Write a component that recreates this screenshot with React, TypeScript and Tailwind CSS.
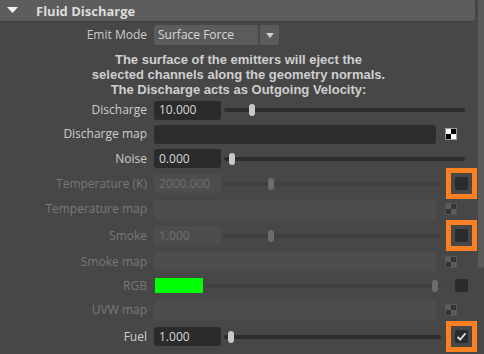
import React from 'react';

const enabledLabel = 'text-[#cdcdcd]';
const disabledLabel = 'text-[#787878]';

function Row({
  h,
  label,
  disabled,
  children,
}: {
  h: string;
  label: string;
  disabled?: boolean;
  children?: React.ReactNode;
}) {
  return (
    <div className={`flex shrink-0 items-center ${h}`}>
      <div className={`w-[147px] shrink-0 text-right whitespace-nowrap ${disabled ? disabledLabel : enabledLabel}`}>
        {label}
      </div>
      <div className="flex-1 flex items-center ml-[7px] min-w-0">{children}</div>
    </div>
  );
}

function NumBox({ value, disabled }: { value: string; disabled?: boolean }) {
  return (
    <div
      className={`w-[67px] h-[19px] shrink-0 rounded-[3px] pl-[5px] flex items-center ${
        disabled ? 'bg-[#4d4d4d] text-[#6f6f6f]' : 'bg-[#2b2b2b] text-[#d6dadd]'
      }`}
    >
      {value}
    </div>
  );
}

function Slider({ pos, disabled, end }: { pos: number; disabled?: boolean; end: string }) {
  return (
    <div className={`relative flex-1 h-[12px] flex items-center ml-[3px] ${end}`}>
      <div className={`w-full h-[4px] rounded-full ${disabled ? 'bg-[#3f3f3f]' : 'bg-[#2d2d2d]'}`} />
      <div
        className={`absolute top-0 w-[6px] h-[12px] rounded-[3px] ${disabled ? 'bg-[#6c6c6c]' : 'bg-[#c9c9c9]'}`}
        style={{ left: pos }}
      />
    </div>
  );
}

function Checker({ disabled }: { disabled?: boolean }) {
  const a = disabled ? 'bg-[#5c5c5c]' : 'bg-white';
  const b = disabled ? 'bg-[#343434]' : 'bg-black';
  return (
    <div className={`w-[12px] h-[12px] grid grid-cols-2 border ${disabled ? 'border-[#555]' : 'border-[#9a9a9a]'}`}>
      <div className={a} />
      <div className={b} />
      <div className={b} />
      <div className={a} />
    </div>
  );
}

function MapBox({ disabled }: { disabled?: boolean }) {
  return (
    <>
      <div className={`flex-1 h-[19px] rounded-[3px] ${disabled ? 'bg-[#4d4d4d]' : 'bg-[#2c2c2c]'}`} />
      <div className="w-[41px] shrink-0 pl-[9px] flex items-center">
        <Checker disabled={disabled} />
      </div>
    </>
  );
}

function Check({ highlight, checked }: { highlight?: boolean; checked?: boolean }) {
  return (
    <div
      className={`w-[31px] h-[31px] ml-[5px] shrink-0 flex items-center justify-center border-[5px] ${
        highlight ? 'border-[#fb8024]' : 'border-transparent'
      }`}
    >
      <div className="w-[13px] h-[13px] rounded-[2px] bg-[#2b2b2b] flex items-center justify-center">
        {checked && (
          <svg width="11" height="11" viewBox="0 0 11 11">
            <path d="M1.5 6 L4.2 8.6 L9.5 2.2" fill="none" stroke="#e0e0e0" strokeWidth="1.8" />
          </svg>
        )}
      </div>
    </div>
  );
}

export default function App() {
  return (
    <div className="w-[484px] h-[354px] overflow-hidden bg-[#474747] flex font-['Open_Sans',sans-serif] text-[12px] leading-[16px]">
      <div className="w-[477px] shrink-0 flex flex-col">
        <div className="h-[22px] mr-[2px] shrink-0 bg-[#5d5d5d] rounded-r-[3px] border-b border-[#3e3e3e] flex items-center">
          <svg width="12" height="7" viewBox="0 0 12 7" className="ml-[7px]">
            <path d="M0 0 L11 0 L5.5 6 Z" fill="#f2f2f2" />
          </svg>
          <span className="ml-[17px] font-bold text-[13px] text-[#dcdcdc]">Fluid Discharge</span>
        </div>

        <div className="mt-[2px] shrink-0">
          <Row h="h-[22px]" label="Emit Mode">
            <div className="w-[104px] h-[20px] bg-[#5b5b5b] rounded-[2px] pl-[4px] flex items-center text-[#d6dadd]">
              Surface Force
            </div>
            <div className="w-[19px] h-[20px] ml-[2px] bg-[#5b5b5b] rounded-[2px] flex items-center justify-center">
              <svg width="8" height="5" viewBox="0 0 8 5">
                <path d="M0 0 L8 0 L4 5 Z" fill="#cfcfcf" />
              </svg>
            </div>
          </Row>
        </div>

        <div className="pt-[6px] h-[52px] shrink-0 text-center font-bold font-['Liberation_Sans',sans-serif] text-[13px] text-[#cfcfcf] leading-[15px]">
          <div>The surface of the emitters will eject the</div>
          <div>selected channels along the geometry normals.</div>
          <div>The Discharge acts as Outgoing Velocity:</div>
        </div>

        <Row h="h-[24px]" label="Discharge">
          <NumBox value="10.000" />
          <Slider pos={25} end="mr-[12px]" />
        </Row>
        <Row h="h-[24px]" label="Discharge map">
          <MapBox />
        </Row>
        <Row h="h-[25px]" label="Noise">
          <NumBox value="0.000" />
          <Slider pos={5} end="mr-[12px]" />
        </Row>
        <Row h="h-[25px]" label="Temperature (K)" disabled>
          <NumBox value="2000.000" disabled />
          <Slider pos={44} disabled end="" />
          <Check highlight />
        </Row>
        <Row h="h-[26px]" label="Temperature map" disabled>
          <MapBox disabled />
        </Row>
        <Row h="h-[27px]" label="Smoke" disabled>
          <NumBox value="1.000" disabled />
          <Slider pos={44} disabled end="" />
          <Check highlight />
        </Row>
        <Row h="h-[25px]" label="Smoke map" disabled>
          <MapBox disabled />
        </Row>
        <Row h="h-[23px]" label="RGB" disabled>
          <div className="w-[48px] h-[15px] ml-[1px] shrink-0 bg-[#00ff00]" />
          <Slider pos={226} disabled end="" />
          <Check />
        </Row>
        <Row h="h-[26px]" label="UVW map" disabled>
          <MapBox disabled />
        </Row>
        <Row h="h-[27px]" label="Fuel">
          <NumBox value="1.000" />
          <Slider pos={4} end="" />
          <Check highlight checked />
        </Row>
        <Row h="h-[26px]" label="">
          <MapBox />
        </Row>
      </div>

      <div className="flex-1 pl-[1px]">
        <div className="h-[268px] bg-[#5a5a5a] rounded-b-[2px]" />
      </div>
    </div>
  );
}
